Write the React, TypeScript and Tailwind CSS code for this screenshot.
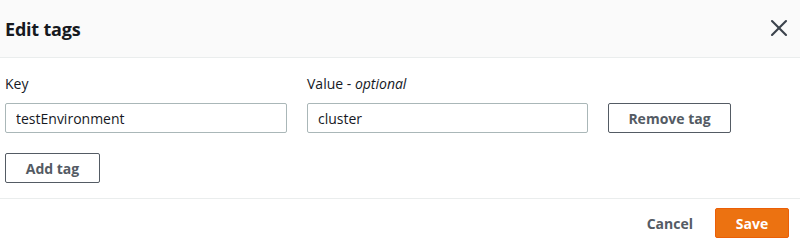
import { X } from 'lucide-react';

const font = { fontFamily: '"Open Sans", "Noto Sans", Arial, sans-serif' };

export default function App() {
  return (
    <div className="w-[800px] h-[245px] bg-white text-[#16191f] overflow-hidden" style={font}>
      {/* Header */}
      <div className="h-[58px] bg-[#fafafa] border-b border-[#eaeded] flex items-center pl-[5px] pr-[7px]">
        <h2 className="text-[18px] font-bold leading-none tracking-[-0.2px] pt-[1px]">Edit tags</h2>
        <button className="ml-auto text-[#3b424c] -mt-[2px]">
          <X className="w-[28px] h-[28px]" strokeWidth={1.8} />
        </button>
      </div>

      {/* Body */}
      <div className="pl-[5px] pt-[15px]">
        <div className="flex items-end gap-[20px]">
          <div className="w-[282px] flex flex-col">
            <label className="text-[14px] leading-[22px] mb-[8px]">Key</label>
            <input
              readOnly
              value="testEnvironment"
              className="h-[30px] border border-[#aab7b8] rounded-[2px] px-[10px] text-[14px] outline-none"
              style={font}
            />
          </div>
          <div className="w-[281px] flex flex-col">
            <label className="text-[14px] leading-[22px] mb-[8px]">
              Value - <i>optional</i>
            </label>
            <input
              readOnly
              value="cluster"
              className="h-[30px] border border-[#aab7b8] rounded-[2px] px-[10px] text-[14px] outline-none"
              style={font}
            />
          </div>
          <button className="w-[123px] h-[30px] border border-[#545b64] rounded-[2px] text-[14px] font-bold text-[#545b64]">
            Remove tag
          </button>
        </div>

        <button className="mt-[20px] w-[95px] h-[30px] border border-[#545b64] rounded-[2px] text-[14px] font-bold text-[#545b64]">
          Add tag
        </button>
      </div>

      {/* Footer */}
      <div className="mt-[15px] border-t border-[#eaeded] flex items-center justify-end gap-[22px] pt-[9px] pr-[11px]">
        <button className="text-[14px] font-bold text-[#545b64]">Cancel</button>
        <button className="w-[74px] h-[30px] bg-[#ec7211] border border-[#eb5f07] rounded-[2px] text-[14px] font-bold text-white">
          Save
        </button>
      </div>
    </div>
  );
}
